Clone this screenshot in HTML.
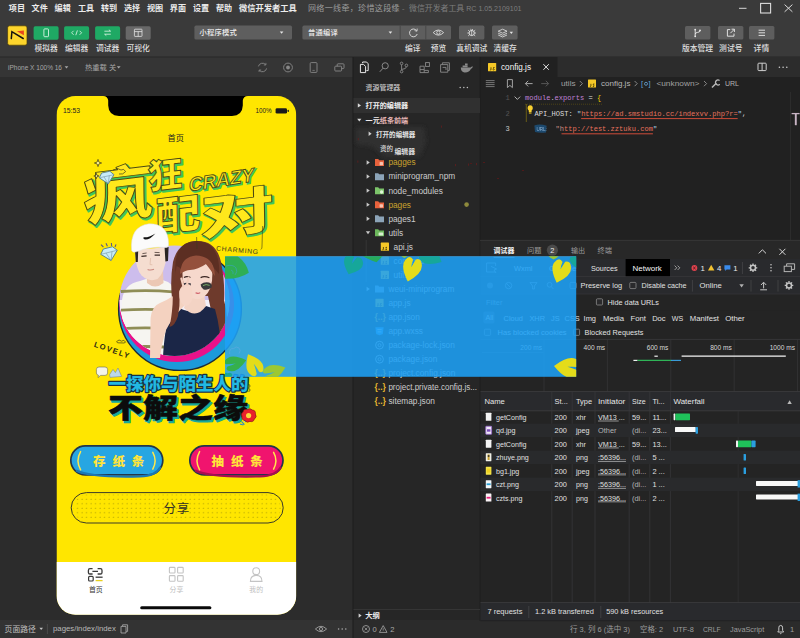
<!DOCTYPE html>
<html lang="zh"><head><meta charset="utf-8"><title>微信开发者工具</title>
<style>
html,body{margin:0;padding:0;background:#2c2c2c;overflow:hidden}
body{width:800px;height:638px;font-family:"Liberation Sans",sans-serif}
svg{display:block;position:absolute;left:0;top:0}
.cj{font-family:"Liberation Sans","Noto Sans CJK SC",sans-serif}
</style></head><body>
<svg font-family="Liberation Sans, sans-serif" width="800" height="638" viewBox="0 0 800 638">
<rect x="0" y="0" width="800" height="638" fill="#2c2c2c"/>
<rect x="0" y="0" width="800" height="57" fill="#3a3a3a"/>
<rect x="0" y="56.5" width="800" height="1" fill="#262626"/>
<rect x="0" y="57.5" width="353" height="19.5" fill="#353535"/>
<rect x="353" y="57" width="127" height="581" fill="#262626"/>
<rect x="480" y="57" width="320" height="183" fill="#212121"/>
<rect x="480" y="57" width="320" height="20" fill="#2c2c2c"/>
<rect x="480" y="57" width="77.5" height="20" fill="#212121"/>
<rect x="480" y="240" width="320" height="381" fill="#242424"/>
<rect x="0" y="620" width="353" height="18" fill="#333333"/>
<rect x="353" y="620" width="447" height="18" fill="#2b2b2b"/>
<path d="M353 57L353 638" stroke="#1c1c1c" stroke-width="1" fill="none"/>
<path d="M480 57L480 621" stroke="#1c1c1c" stroke-width="0.8" fill="none"/>
<g fill="#ececec"><text class="cj" x="8.8" y="11.2" font-size="8.1" font-weight="bold">项目</text></g>
<g fill="#ececec"><text class="cj" x="31.6" y="11.2" font-size="8.1" font-weight="bold">文件</text></g>
<g fill="#ececec"><text class="cj" x="54.6" y="11.2" font-size="8.1" font-weight="bold">编辑</text></g>
<g fill="#ececec"><text class="cj" x="78" y="11.2" font-size="8.1" font-weight="bold">工具</text></g>
<g fill="#ececec"><text class="cj" x="101" y="11.2" font-size="8.1" font-weight="bold">转到</text></g>
<g fill="#ececec"><text class="cj" x="124" y="11.2" font-size="8.1" font-weight="bold">选择</text></g>
<g fill="#ececec"><text class="cj" x="147" y="11.2" font-size="8.1" font-weight="bold">视图</text></g>
<g fill="#ececec"><text class="cj" x="169.8" y="11.2" font-size="8.1" font-weight="bold">界面</text></g>
<g fill="#ececec"><text class="cj" x="193" y="11.2" font-size="8.1" font-weight="bold">设置</text></g>
<g fill="#ececec"><text class="cj" x="216" y="11.2" font-size="8.1" font-weight="bold">帮助</text></g>
<g fill="#ececec"><text class="cj" x="239" y="11.2" font-size="8.25" font-weight="bold">微信开发者工具</text></g>
<g fill="#9c9c9c"><text class="cj" x="308" y="11.2" font-size="8" letter-spacing="0.35">网络一线牵，珍惜这段缘</text></g>
<g fill="#7c7c7c"><text x="402" y="11" font-family="Liberation Sans" font-size="7.5" xml:space="preserve">-</text></g>
<g fill="#7e7e7e"><text class="cj" x="409" y="11" font-size="7.9">微信开发者工具</text><text x="464.3" y="11" font-family="Liberation Sans" font-size="7.05" xml:space="preserve"> RC 1.05.2109101</text></g>
<path d="M739 8.3L746.5 8.3" stroke="#d8d8d8" stroke-width="1" fill="none"/>
<rect x="760.6" y="3.4" width="10" height="9.6" fill="none" stroke="#dcdcdc" stroke-width="1.1"/>
<path d="M784.6 4.6L792.4 11.8M792.4 4.6L784.6 11.8" fill="none" stroke="#dcdcdc" stroke-width="1"/>
<rect x="7.6" y="25.8" width="19.4" height="19.4" fill="#fdd52c" rx="2" stroke="#4a3c08" stroke-width="0.7"/>
<path d="M11.3 38.6L11.9 31.7L23.2 38.5" fill="none" stroke="#151210" stroke-width="1.5" stroke-linejoin="miter" stroke-linecap="round"/>
<path d="M16.9 31.3L23.9 30.4L23.9 35.2Z" fill="#e8451e"/>
<rect x="33.6" y="26.3" width="25" height="13.4" fill="#1fa964" rx="1.6"/>
<rect x="64.1" y="26.3" width="25" height="13.4" fill="#1fa964" rx="1.6"/>
<rect x="95.1" y="26.3" width="25" height="13.4" fill="#1fa964" rx="1.6"/>
<rect x="125.7" y="26.3" width="25" height="13.4" fill="#686868" rx="1.6"/>
<rect x="43.9" y="28.9" width="4.6" height="7.8" fill="none" rx="0.8" stroke="#d8f5e4" stroke-width="0.9"/>
<path d="M73.6 30.8L71.6 32.8L73.6 34.8M79.6 30.8L81.6 32.8L79.6 34.8M77.4 30.4L75.8 35.2" fill="none" stroke="#e2f7ea" stroke-width="0.8"/>
<path d="M104.4 31.2L110.6 31.2M108.9 29.8L110.6 31.2M110.8 34.2L104.6 34.2M106.3 35.6L104.6 34.2" fill="none" stroke="#e2f7ea" stroke-width="0.8"/>
<rect x="134.4" y="29.2" width="7.6" height="7.2" fill="none" rx="0.6" stroke="#e4e4e4" stroke-width="0.8"/>
<path d="M134.4 31.6L142 31.6M138.2 31.6L138.2 36.4" fill="none" stroke="#e4e4e4" stroke-width="0.8"/>
<g fill="#dedede"><text class="cj" x="34.48" y="50.8" font-size="7.75" font-weight="500">模拟器</text></g>
<g fill="#dedede"><text class="cj" x="64.97" y="50.8" font-size="7.75" font-weight="500">编辑器</text></g>
<g fill="#dedede"><text class="cj" x="95.97" y="50.8" font-size="7.75" font-weight="500">调试器</text></g>
<g fill="#dedede"><text class="cj" x="126.57" y="50.8" font-size="7.75" font-weight="500">可视化</text></g>
<rect x="194.4" y="25.6" width="97.6" height="14" fill="#5e5e5e" rx="1.6"/>
<g fill="#eeeeee"><text class="cj" x="199.6" y="35.4" font-size="7.3" letter-spacing="0.2" font-weight="500">小程序模式</text></g>
<path d="M279.8 31.6L283.4 31.6L281.6 33.8Z" fill="#e6e6e6"/>
<rect x="302.4" y="25.6" width="148.6" height="14" fill="#5e5e5e" rx="1.6"/>
<g fill="#eeeeee"><text class="cj" x="308" y="35.4" font-size="7.3" letter-spacing="0.2" font-weight="500">普通编译</text></g>
<path d="M388.6 31.6L392.2 31.6L390.4 33.8Z" fill="#e6e6e6"/>
<path d="M400.2 25.6L400.2 39.6" stroke="#444" stroke-width="0.8" fill="none"/>
<path d="M425.8 25.6L425.8 39.6" stroke="#444" stroke-width="0.8" fill="none"/>
<path d="M416.6 30.6A3.9 3.9 0 1 0 417.2 34.0" fill="none" stroke="#e0e0e0" stroke-width="0.9"/>
<path d="M417.2 28.6L417.0 31.2L414.6 30.6" fill="none" stroke="#e0e0e0" stroke-width="0.8"/>
<path d="M433.2 32.6Q438.4 27.4 443.6 32.6Q438.4 37.8 433.2 32.6Z" fill="none" stroke="#e0e0e0" stroke-width="0.85"/>
<circle cx="438.4" cy="32.6" r="1.7" fill="none" stroke="#e0e0e0" stroke-width="0.85"/>
<g fill="#dedede"><text class="cj" x="405.05" y="50.8" font-size="7.75" font-weight="500">编译</text></g>
<g fill="#dedede"><text class="cj" x="430.85" y="50.8" font-size="7.75" font-weight="500">预览</text></g>
<rect x="459" y="25.6" width="25.4" height="14" fill="#5e5e5e" rx="1.6"/>
<circle cx="471.7" cy="33" r="2.6" fill="none" stroke="#e4e4e4" stroke-width="0.9"/>
<path d="M471.7 30.4L471.7 35.6M468.2 30.2L469.6 31.4M475.2 30.2L473.8 31.4M467.4 33L469.1 33M476 33L474.3 33M468.2 35.9L469.6 34.7M475.2 35.9L473.8 34.7M470.4 29.2L471.7 30.3L473 29.2" fill="none" stroke="#e4e4e4" stroke-width="0.8"/>
<g fill="#dedede"><text class="cj" x="456.2" y="50.8" font-size="7.75" font-weight="500">真机调试</text></g>
<rect x="492" y="25.6" width="25.6" height="14" fill="#5e5e5e" rx="1.6"/>
<path d="M498.2 31.2L502.6 29.2L507 31.2L502.6 33.2ZM498.2 33.2L502.6 35.2L507 33.2M498.2 35.0L502.6 37.0L507 35.0" fill="none" stroke="#e4e4e4" stroke-width="0.8"/>
<path d="M509.6 31.8L513 31.8L511.3 33.9Z" fill="#e6e6e6"/>
<g fill="#dedede"><text class="cj" x="493.38" y="50.8" font-size="7.75" font-weight="500">清缓存</text></g>
<rect x="685" y="26" width="25.4" height="13.6" fill="#5e5e5e" rx="1.6"/>
<rect x="718" y="26" width="25.4" height="13.6" fill="#5e5e5e" rx="1.6"/>
<rect x="749" y="26" width="25.4" height="13.6" fill="#5e5e5e" rx="1.6"/>
<path d="M695.2 29.6L695.2 36.2M695.2 34.2Q695.2 32.6 697.6 32.4Q700 32.2 700 30.6" fill="none" stroke="#ececec" stroke-width="0.9"/>
<circle cx="695.2" cy="29.6" r="0.9" fill="#ececec"/>
<circle cx="695.2" cy="36.3" r="0.9" fill="#ececec"/>
<circle cx="700" cy="30.4" r="0.9" fill="#ececec"/>
<path d="M730.2 29.6L727.4 29.6L727.4 36.2L734 36.2L734 33.6" fill="none" stroke="#ececec" stroke-width="0.9"/>
<path d="M730.4 33.2L734.2 29.4M731.6 29.2L734.4 29.2L734.4 32" fill="none" stroke="#ececec" stroke-width="0.9"/>
<path d="M758.6 30.2L765 30.2M758.6 32.8L765 32.8M758.6 35.4L765 35.4" fill="none" stroke="#ececec" stroke-width="0.9"/>
<g fill="#dedede"><text class="cj" x="681.9" y="50.8" font-size="7.8" font-weight="500">版本管理</text></g>
<g fill="#dedede"><text class="cj" x="719.1" y="50.8" font-size="7.8" font-weight="500">测试号</text></g>
<g fill="#dedede"><text class="cj" x="753.6" y="50.8" font-size="7.8" font-weight="500">详情</text></g>
<g fill="#a6a6a6"><text x="8" y="69.8" font-family="Liberation Sans" font-size="7.3" textLength="54" lengthAdjust="spacingAndGlyphs" xml:space="preserve">iPhone X 100% 16</text></g>
<path d="M64.6 66.2L68.4 66.2L66.5 68.6Z" fill="#a6a6a6"/>
<g fill="#a6a6a6"><text class="cj" x="85" y="69.9" font-size="7.3">热重载</text><text class="cj" x="108.93" y="69.9" font-size="7.3">关</text></g>
<path d="M116.8 66.2L120.6 66.2L118.7 68.6Z" fill="#a6a6a6"/>
<path d="M258.4 66.4A4.2 4.2 0 0 1 265.6 64.6M266.6 68.4A4.2 4.2 0 0 1 259.4 70.4" fill="none" stroke="#888888" stroke-width="0.9"/>
<path d="M265.9 62.9L265.9 65L263.8 65M259.1 72L259.1 70L261.2 70" fill="none" stroke="#888888" stroke-width="0.8"/>
<circle cx="288" cy="67.5" r="4.4" fill="none" stroke="#888888" stroke-width="0.9"/>
<circle cx="288" cy="67.5" r="1.9" fill="#888888"/>
<rect x="310.2" y="62.6" width="6.8" height="9.8" fill="none" rx="1" stroke="#888888" stroke-width="0.9"/>
<path d="M312.4 70.4L314.8 70.4" stroke="#888888" stroke-width="0.7" fill="none"/>
<rect x="337.2" y="63.8" width="6.8" height="4.8" fill="none" rx="0.8" stroke="#888888" stroke-width="0.9"/>
<rect x="334.8" y="66.2" width="6.8" height="4.8" fill="#353535" rx="0.8" stroke="#888888" stroke-width="0.9"/>
<clipPath id="ph"><rect x="56.5" y="96.0" width="239.8" height="518.8" rx="19"/></clipPath>
<g clip-path="url(#ph)">
<rect x="56.5" y="96" width="239.8" height="518.8" fill="#ffe600"/>
<rect x="56.5" y="562" width="239.8" height="60" fill="#ffffff"/>
</g>
<path d="M103 96L248 96Q243.2 96.2 242.8 100.6L242.8 105.6Q242.4 115.8 232 116L119 116Q108.6 115.8 108.2 105.6L108.2 100.6Q107.8 96.2 103 96Z" fill="#000"/>
<g fill="#222"><text x="63" y="113.2" font-family="Liberation Sans" font-size="6.6" textLength="17" lengthAdjust="spacingAndGlyphs" xml:space="preserve">15:53</text></g>
<g fill="#222"><text x="255.4" y="113.2" font-family="Liberation Sans" font-size="6.4" textLength="16.2" lengthAdjust="spacingAndGlyphs" xml:space="preserve">100%</text></g>
<rect x="275.6" y="108.2" width="11.4" height="5.4" fill="#1a1a1a" rx="1.4"/>
<rect x="287.6" y="109.8" width="1.2" height="2.2" fill="#1a1a1a" rx="0.5"/>
<g fill="#222"><text class="cj" x="167.6" y="141" font-size="8.2">首页</text></g>
<g transform="translate(85.6 222.4) rotate(-7) skewX(-6) scale(0.28 0.24)" fill="#3fc65a" stroke="#3fc65a" stroke-width="7.75" stroke-linejoin="round"><text class="cj" x="0" y="0" font-size="250" font-weight="900">疯</text></g>
<g transform="translate(84 221) rotate(-7) skewX(-6) scale(0.28 0.24)" fill="#ffe81c" stroke="#4d4a12" stroke-width="3.49" stroke-linejoin="round"><text class="cj" x="0" y="0" font-size="250" font-weight="900">疯</text></g>
<g transform="translate(149.6 191.4) rotate(-7) skewX(-6) scale(0.14 0.14)" fill="#3fc65a" stroke="#3fc65a" stroke-width="14.28" stroke-linejoin="round"><text class="cj" x="0" y="0" font-size="250" font-weight="900">狂</text></g>
<g transform="translate(148 190) rotate(-7) skewX(-6) scale(0.14 0.14)" fill="#ffe81c" stroke="#4d4a12" stroke-width="6.42" stroke-linejoin="round"><text class="cj" x="0" y="0" font-size="250" font-weight="900">狂</text></g>
<g transform="translate(157.6 233.4) rotate(-7) skewX(-6) scale(0.18 0.16)" fill="#3fc65a" stroke="#3fc65a" stroke-width="11.9" stroke-linejoin="round"><text class="cj" x="0" y="0" font-size="250" font-weight="900">配</text></g>
<g transform="translate(156 232) rotate(-7) skewX(-6) scale(0.18 0.16)" fill="#ffe81c" stroke="#4d4a12" stroke-width="5.36" stroke-linejoin="round"><text class="cj" x="0" y="0" font-size="250" font-weight="900">配</text></g>
<g transform="translate(201.6 237.4) rotate(-7) skewX(-6) scale(0.3 0.2)" fill="#3fc65a" stroke="#3fc65a" stroke-width="8.02" stroke-linejoin="round"><text class="cj" x="0" y="0" font-size="250" font-weight="900">对</text></g>
<g transform="translate(200 236) rotate(-7) skewX(-6) scale(0.3 0.2)" fill="#ffe81c" stroke="#4d4a12" stroke-width="3.61" stroke-linejoin="round"><text class="cj" x="0" y="0" font-size="250" font-weight="900">对</text></g>
<g transform="translate(188.5 191.6) rotate(-9) skewX(-14)" font-family="Liberation Sans" font-weight="bold" font-size="19"><text x="1.4" y="1.4" fill="#3fc65a" stroke="#3fc65a" stroke-width="1.6" textLength="66" lengthAdjust="spacingAndGlyphs">CRAZY</text><text x="0" y="0" fill="#ffe81c" stroke="#4d4a12" stroke-width="0.9" textLength="66" lengthAdjust="spacingAndGlyphs">CRAZY</text></g>
<circle cx="180" cy="309" r="61.4" fill="#1c9ada" stroke="#1b2b3a" stroke-width="1.4"/>
<circle cx="176.6" cy="304.6" r="57.4" fill="#e9128a"/>
<clipPath id="pc"><circle cx="174.6" cy="300.8" r="55.2"/><rect x="110" y="215" width="135" height="80"/></clipPath>
<clipPath id="pc2"><circle cx="174.6" cy="300.8" r="55.2"/></clipPath>
<g clip-path="url(#pc)">
<g clip-path="url(#pc2)">
<circle cx="174.6" cy="300.8" r="56" fill="#cdbdec"/>
<rect x="116" y="300" width="124" height="60" fill="#f4f1f8"/>
</g>
<path d="M122 300Q124 284 140 281L146 279L160 279L168 282Q174 285 174 296L172 358L122 358Z" fill="#f6f5f1"/>
<path d="M121 290.1Q148 288.40000000000003 173 290.40000000000003L173 293.20000000000005Q148 291.20000000000005 121 292.90000000000003Z" fill="#8f8d56"/>
<path d="M121 308.7Q148 307.0 173 309.0L173 311.8Q148 309.8 121 311.5Z" fill="#8f8d56"/>
<path d="M121 327.3Q148 325.6 173 327.6L173 330.40000000000003Q148 328.40000000000003 121 330.1Z" fill="#8f8d56"/>
<path d="M121 345.9Q148 344.2 173 346.2L173 349.0Q148 347.0 121 348.7Z" fill="#8f8d56"/>
<path d="M146.5 270L163 270L163.5 283Q155 290 147 283Z" fill="#ecc8b4"/>
<path d="M196 241Q216 240 221 262Q225 282 224 300Q229 316 225 334Q218 338 213 330Q210 320 211 310L208 296L184 296L180 312Q178 326 170 328Q168 312 172 298Q170 280 173 262Q178 242 196 241Z" fill="#6e3a2c"/>
<path d="M176 306Q190 316 206 306L215 309Q221 330 221 356L163 356Q165 326 170 312Z" fill="#1b2647"/>
<path d="M188 294L204 294L206 306Q196 320 184 308Z" fill="#f3d3c4"/>
</g>
<path d="M135.4 250Q135 268 141.6 275.6Q149 282.4 157.6 279Q166 272 167.6 247Z" fill="#f5ddd0"/>
<path d="M135 250.4L138.2 250L137.8 262L135.8 262ZM164.6 247.6L168.6 247L168 261L165.4 261.6Z" fill="#2a2422"/>
<path d="M131.6 250.6Q129.6 226.4 149 223.8Q168.4 223.6 168.6 244Q168.8 247.4 166.4 247.4Q150 246 136.4 251.8Q132.6 253.2 131.6 250.6Z" fill="#fbfbfb" stroke="#dcdada" stroke-width="0.5"/>
<path d="M143.6 237.2Q147.4 238.2 155.4 233.4Q149.6 239.8 145.4 239.6Q142.8 239.2 143.6 237.2Z" fill="#111"/>
<path d="M141.4 256.4L146.6 255.8M154.6 255.2L160 255.2" fill="none" stroke="#3a2a26" stroke-width="1.2"/>
<path d="M142.4 253.6L146.6 253M154.6 252.4L159.6 252.6" fill="none" stroke="#4a3a34" stroke-width="0.8"/>
<path d="M147.6 269.4Q150.6 270.6 154 269.2" fill="none" stroke="#c8867c" stroke-width="1.1"/>
<path d="M150.6 258L150 264.6L152.4 264.8" fill="none" stroke="#e0bca8" stroke-width="0.8"/>
<path d="M182.4 270Q183 262 196 261.4Q211 262 212.4 274Q212.6 290 204 297Q196 302 189 296Q182 288 182.4 270Z" fill="#f6d8cc"/>
<path d="M180 274Q180 256 196 254.6Q214 255 215 276Q209 268 206 264Q198 269.6 190 270Q186 270 180 274Z" fill="#94503c"/>
<path d="M196 241Q184 241 178 252Q174 262 176 274L181 268Q183 257 196 255.6Q210 256 214 268L219 274Q220 256 212 247Q206 241 196 241Z" fill="#5c2e22"/>
<path d="M184 277.4Q187 275.6 190.4 277.6M200.6 277.6Q204.6 275.6 209.4 277.8" fill="none" stroke="#3a2522" stroke-width="1.2"/>
<path d="M200.6 284.6Q204 281.6 209 282.6Q212.6 284 211.6 287.6Q208 290.6 203.6 289.4Q200.6 287.6 200.6 284.6Z" fill="#3a3a3c"/>
<path d="M203 285.6Q206 283.6 209.6 285.4" fill="none" stroke="#7ab86a" stroke-width="0.9"/>
<path d="M183 283.4Q186.6 281.8 191 283.6L190.4 286.4Q186.6 287.4 183.4 286Z" fill="#3c3840"/>
<path d="M150.6 318Q152 306 160 303Q176 296 181 289L190 292Q190 300 184 306Q172 318 166 330Q162 342 160 358L150 358Z" fill="#f4d2c0"/>
<path d="M176.6 266Q172.6 288 172.6 304Q171.6 318 169.4 327Q175 326 178 316Q180 306 179.6 296Q178.6 280 180.4 268Z" fill="#70392b"/>
<path d="M179.4 297Q178.4 289 182 286.4L186 284Q190 283.4 191.6 287L192.8 297Q191 305.4 185.6 306Q180.6 304.6 179.4 297Z" fill="#f6d6c8"/>
<path d="M183.4 286.4L181.4 278.6M187 285L188.6 277.6" fill="none" stroke="#f3cfc0" stroke-width="2.2" stroke-linecap="round"/>
<path d="M195.6 292.8Q198 294 200.2 292.6" fill="none" stroke="#d0606a" stroke-width="1.1"/>
<g transform="translate(107 178) rotate(-12)">
<path d="M-7.5 -1.8L-4.2 -6L4.2 -6L7.5 -1.8L0 6Z" fill="#c8ecf8" stroke="#4a7a8a" stroke-width="0.8"/>
<path d="M-7.5 -1.8L7.5 -1.8M-2.7 -1.8L0 6L2.7 -1.8" fill="none" stroke="#7a9aa8" stroke-width="0.6"/>
</g>
<g transform="translate(109.5 254.2) rotate(-14)">
<path d="M-8.5 -1.95L-4.76 -6.5L4.76 -6.5L8.5 -1.95L0 6.5Z" fill="#c8ecf8" stroke="#4a7a8a" stroke-width="0.8"/>
<path d="M-8.5 -1.95L8.5 -1.95M-3.06 -1.95L0 6.5L3.06 -1.95" fill="none" stroke="#7a9aa8" stroke-width="0.6"/>
</g>
<path d="M98 159.4Q98 163 101.6 163Q98 163 98 166.6Q98 163 94.4 163Q98 163 98 159.4Z" fill="#fff6a0" stroke="#3c3a1c" stroke-width="0.7"/>
<path d="M96.4 173.4Q96.4 176 99 176Q96.4 176 96.4 178.6Q96.4 176 93.8 176Q96.4 176 96.4 173.4Z" fill="#fff6a0" stroke="#3c3a1c" stroke-width="0.7"/>
<path d="M101 244.6L103.4 247M106 243.2L107.4 246.2M111.4 243L111.6 246M116 244.4L115 247" fill="none" stroke="#5a5a8a" stroke-width="1.1"/>
<path d="M113 170Q118 167 121 170Q124 168 125.6 171.6Q123 175 119 174" fill="none" stroke="#3c3a1c" stroke-width="0.7"/>
<g fill="#3c3a1c" font-family="Liberation Sans" font-size="6.6"><text transform="translate(216 250.6) rotate(5)" textLength="42" lengthAdjust="spacing" font-size="6.8">CHARMING</text><text transform="translate(93.4 346.4) rotate(19)" textLength="36.6" lengthAdjust="spacing" font-size="7.6" font-weight="bold" fill="#2c2a14">LOVELY</text></g>
<path d="M116.6 341.6Q119 338.6 121.6 341.2Q124 338.8 125.6 342.2L124 343L117.6 342.8Z" fill="none" stroke="#3c3a1c" stroke-width="0.7"/>
<path d="M196.6 237L197 249M262.6 226L262 246Q262.4 249 260.6 249.6" fill="none" stroke="#3c3a1c" stroke-width="0.6"/>
<path d="M96.4 369.4Q96.4 367 99 367L105 367Q107.6 367 107.6 369.4L107.6 373Q107.6 375.4 105 375.4L100.6 375.4L98 377.6L98.4 375.2Q96.4 374.8 96.4 373Z" fill="#f4f4e6" stroke="#6a6a4a" stroke-width="0.6"/>
<path d="M109.6 374.6L113 369.4L115.4 372.6L118 368L121.6 376.4L110 377.4Z" fill="#bcd8ea" stroke="#6a7a8a" stroke-width="0.5"/>
<g transform="translate(108.6 390.2) scale(0.07 0.07)" fill="#20b4dc" stroke="#143248" stroke-width="34.27" stroke-linejoin="round"><text class="cj" x="0" y="0" font-size="250" font-weight="900">一探你与陌生人的</text></g>
<g transform="translate(108.6 390.2) scale(0.07 0.07)" fill="#22b8e2"><text class="cj" x="0" y="0" font-size="250" font-weight="900">一探你与陌生人的</text></g>
<g transform="translate(109.6 419.6) scale(0.14 0.11)" fill="#17a89a" stroke="#17a89a" stroke-width="9.74" stroke-linejoin="round"><text class="cj" x="0" y="0" font-size="250" font-weight="900">不解之缘</text></g>
<g transform="translate(108 418.2) scale(0.14 0.11)" fill="#0c0c0c" stroke="#0c0c0c" stroke-width="4.87" stroke-linejoin="round"><text class="cj" x="0" y="0" font-size="250" font-weight="900">不解之缘</text></g>
<path d="M248.6 384L250.2 386L248.6 388L250.2 390L248.6 392" fill="none" stroke="#2a2a2a" stroke-width="0.7"/>
<path d="M243 412Q243.6 408.6 247.4 409.6Q250 407.6 252.4 410Q256 410.4 255.4 414Q257.4 417 254.4 419Q253.6 422.4 250 421.4Q247 423.4 245 420.6Q241.2 420 242 416.4Q240.4 414 243 412Z" fill="#e8212b" stroke="#7a1418" stroke-width="0.6"/>
<circle cx="248.6" cy="415.6" r="2.6" fill="#f8d83a"/>
<path d="M241.4 421.4L244.4 424.6M240 424L243.4 425" fill="none" stroke="#2a88c8" stroke-width="1.1"/>
<rect x="70.8" y="445.8" width="92" height="29" fill="#27a6e2" rx="14.5" stroke="#23364a" stroke-width="1.7"/>
<path d="M80.6 451.6Q75.4 460.6 80.6 469.8" fill="none" stroke="#ffe84a" stroke-width="1.5" stroke-linecap="round"/>
<path d="M152.8 452.4Q157.4 460.6 152.8 469.2" fill="none" stroke="#ffe84a" stroke-width="1.5" stroke-linecap="round"/>
<path d="M76 470.6Q90 477.6 140 476.4Q156 476 160.4 467" fill="none" stroke="#1b78b4" stroke-width="2.2"/>
<g transform="translate(93 466.2) scale(0.05 0.05)" fill="#ffe43a"><text class="cj" x="0" y="0" font-size="250" font-weight="900" letter-spacing="137.5">存纸条</text></g>
<rect x="189.8" y="445.8" width="93.2" height="29" fill="#f0146e" rx="14.5" stroke="#23364a" stroke-width="1.7"/>
<path d="M199.6 451.6Q194.4 460.6 199.6 469.8" fill="none" stroke="#ffe84a" stroke-width="1.5" stroke-linecap="round"/>
<path d="M273.6 452.4Q278.2 460.6 273.6 469.2" fill="none" stroke="#ffe84a" stroke-width="1.5" stroke-linecap="round"/>
<path d="M195 470.6Q209 477.6 260 476.4Q276 476 281 467" fill="none" stroke="#a80e50" stroke-width="2.2"/>
<g transform="translate(211.6 466.2) scale(0.05 0.05)" fill="#ffe43a"><text class="cj" x="0" y="0" font-size="250" font-weight="900" letter-spacing="137.5">抽纸条</text></g>
<pattern id="dots" x="71" y="492.6" width="4.5" height="4.5" patternUnits="userSpaceOnUse"><circle cx="2" cy="2" r="0.5" fill="#76700c"/></pattern>
<rect x="71.2" y="492.6" width="212" height="30.4" fill="#ffe600" rx="15.2" stroke="#3a3a2a" stroke-width="1"/>
<rect x="73.6" y="494.6" width="207.2" height="26.4" fill="url(#dots)" rx="13.2"/>
<g transform="translate(163.6 512.6) scale(0.05 0.05)" fill="#333326"><text class="cj" x="0" y="0" font-size="250" letter-spacing="11.9">分享</text></g>
<path d="M92.6 568.6L90 568.6Q88.4 568.6 88.4 570.4L88.4 572.4Q88.4 574 90 574L92.6 574M97.6 568.6L100.4 568.6Q102 568.6 102 570.4L102 572.4Q102 574 100.4 574L97.6 574M92.4 571.3L98 571.3" fill="none" stroke="#3a3a3a" stroke-width="1.3"/>
<rect x="88.6" y="576.4" width="4.6" height="4.6" fill="none" rx="1" stroke="#3a3a3a" stroke-width="1.2"/>
<path d="M95.6 577.2L102.6 577.2" stroke="#3a3a3a" stroke-width="1.3" fill="none"/>
<path d="M95.6 580.6L102.6 580.6" stroke="#e8d020" stroke-width="1.3" fill="none"/>
<g fill="#333"><text class="cj" x="88.9" y="592.3" font-size="6.9">首页</text></g>
<rect x="169.4" y="567.4" width="5.6" height="5.6" fill="none" rx="0.8" stroke="#c4c4c4" stroke-width="1.1"/>
<rect x="169.4" y="575.6" width="5.6" height="5.6" fill="none" rx="0.8" stroke="#c4c4c4" stroke-width="1.1"/>
<rect x="177.6" y="567.4" width="5.6" height="5.6" fill="none" rx="0.8" stroke="#c4c4c4" stroke-width="1.1"/>
<rect x="177.6" y="575.6" width="5.6" height="5.6" fill="none" rx="0.8" stroke="#c4c4c4" stroke-width="1.1"/>
<g fill="#c0c0c0"><text class="cj" x="169.5" y="592.3" font-size="6.9">分享</text></g>
<circle cx="256.2" cy="571.2" r="3.4" fill="none" stroke="#c4c4c4" stroke-width="1.1"/>
<path d="M250.4 581.4Q250.4 575.4 256.2 575.4Q262 575.4 262 581.4Z" fill="none" stroke="#c4c4c4" stroke-width="1.1"/>
<g fill="#c0c0c0"><text class="cj" x="249.3" y="592.3" font-size="6.9">我的</text></g>
<rect x="140.2" y="606.2" width="71.2" height="3" fill="#0a0a0a" rx="1.5"/>
<path d="M360.4 64.4L360.4 72.6L365.6 72.6L365.6 66.6L363.6 64.4Z" fill="none" stroke="#e8e8e8" stroke-width="1"/>
<path d="M362.6 63.2L362.6 62L366.6 62L368.2 63.8L368.2 70.6L366.4 70.6" fill="none" stroke="#e8e8e8" stroke-width="1"/>
<circle cx="385.2" cy="65.8" r="3.1" fill="none" stroke="#8a8a8a" stroke-width="1"/>
<path d="M383 68.2L379.8 71.8" stroke="#8a8a8a" stroke-width="1" fill="none"/>
<circle cx="401.6" cy="63.4" r="1.3" fill="none" stroke="#8a8a8a" stroke-width="0.9"/>
<circle cx="401.6" cy="71.6" r="1.3" fill="none" stroke="#8a8a8a" stroke-width="0.9"/>
<circle cx="406.4" cy="65.4" r="1.3" fill="none" stroke="#8a8a8a" stroke-width="0.9"/>
<path d="M401.6 64.8L401.6 70.2M406.4 66.8Q406.4 69 401.8 69.4" fill="none" stroke="#8a8a8a" stroke-width="0.9"/>
<path d="M420 66.2L424.2 66.2L424.2 70.4L428.4 70.4L428.4 72.6L420 72.6ZM420 69.6L424 69.6M424.2 70.4L424.2 72.6" fill="none" stroke="#8a8a8a" stroke-width="0.9"/>
<rect x="425.6" y="62.6" width="3.8" height="3.8" fill="none" stroke="#8a8a8a" stroke-width="0.9"/>
<path d="M440.6 64.6L447.8 64.6L447.8 72.2L440.6 72.2ZM442.4 64.6L442.4 62.8L449.4 62.8L449.4 70.4L447.8 70.4M442.6 67.4L446 67.4L446 70" fill="none" stroke="#8a8a8a" stroke-width="0.9"/>
<path d="M460.8 67.6L470.6 67.6Q471.6 66.2 473 66.6Q472.4 68.6 470.8 69Q469.4 72.6 464.6 72.4Q461 72.2 460.8 67.6Z" fill="#8a8a8a"/>
<path d="M462.6 65.6L467.6 65.6L467.6 67.2L462.6 67.2ZM465 63.6L467.6 63.6L467.6 65.2L465 65.2Z" fill="#8a8a8a"/>
<g fill="#cccccc"><text class="cj" x="365.6" y="90.2" font-size="6.95" font-weight="500">资源管理器</text></g>
<circle cx="460.2" cy="87.6" r="0.75" fill="#c0c0c0"/>
<circle cx="463.8" cy="87.6" r="0.75" fill="#c0c0c0"/>
<circle cx="467.4" cy="87.6" r="0.75" fill="#c0c0c0"/>
<rect x="353.5" y="98" width="126.5" height="15" fill="#303030"/>
<path d="M357.8 103.2L361 105.4L357.8 107.6Z" fill="#d8d8d8"/>
<g fill="#f0f0f0"><text class="cj" x="365.6" y="108.2" font-size="7.1" font-weight="bold">打开的编辑器</text></g>
<path d="M357.2 118.8L361.4 118.8L359.3 121.4Z" fill="#d8d8d8"/>
<g fill="#f0ecec"><text class="cj" x="365.6" y="122.6" font-size="7.1" font-weight="bold">一元</text></g>
<g fill="#e6b8b8"><text class="cj" x="379.8" y="122.6" font-size="7.1" font-weight="bold">纸条前端</text></g>
<filter id="bl1" x="-10%" y="-20%" width="120%" height="140%"><feGaussianBlur stdDeviation="2.2"/></filter>
<path d="M356 128L424 127L426 142L420 156L384 157L372 146L356 144Z" fill="#333333" filter="url(#bl1)" opacity="0.9"/>
<path d="M368.6 131.6L371.6 133.8L368.6 136Z" fill="#d0d0d0"/>
<g fill="#e4e4e4"><text class="cj" x="376" y="136.8" font-size="6.55" font-weight="bold">打开的编辑器</text></g>
<g fill="#dcdcdc"><text class="cj" x="380" y="150.6" font-size="6.5" font-weight="500">资的</text></g>
<g fill="#dcdcdc"><text class="cj" x="394.4" y="154" font-size="6.9" font-weight="bold">编辑器</text></g>
<rect x="357.8" y="138" width="0.9" height="2.2" fill="#5c1e1e"/>
<rect x="357.4" y="160.5" width="0.9" height="2.2" fill="#5c1e1e"/>
<rect x="441" y="125.5" width="0.9" height="2.2" fill="#5c1e1e"/>
<rect x="468" y="163.5" width="0.9" height="2.2" fill="#5c1e1e"/>
<rect x="476" y="163" width="0.9" height="2.2" fill="#5c1e1e"/>
<rect x="455" y="164" width="0.9" height="2.2" fill="#5c1e1e"/>
<path d="M366.6 160.3L369.8 162.5L366.6 164.7Z" fill="#c8c8c8"/>
<path d="M375 159.1L378.2 159.1L379.2 160.3L384 160.3L384 166.1L375 166.1Z" fill="#e8623c"/>
<rect x="379.6" y="162.1" width="3.4" height="3.2" fill="#f6c4b0" rx="0.6"/>
<g fill="#c9a22e"><text x="388.4" y="165.4" font-family="Liberation Sans" font-size="8.3" textLength="27.23" lengthAdjust="spacingAndGlyphs" xml:space="preserve">pagges</text></g>
<path d="M366.6 174.35L369.8 176.55L366.6 178.75Z" fill="#c8c8c8"/>
<path d="M375 173.15L378.2 173.15L379.2 174.35L384 174.35L384 180.15L375 180.15Z" fill="#8ca4b8"/>
<g fill="#cccccc"><text x="388.4" y="179.45" font-family="Liberation Sans" font-size="8.3" textLength="66.89" lengthAdjust="spacingAndGlyphs" xml:space="preserve">miniprogram_npm</text></g>
<path d="M366.6 188.4L369.8 190.6L366.6 192.8Z" fill="#c8c8c8"/>
<path d="M375 187.2L378.2 187.2L379.2 188.4L384 188.4L384 194.2L375 194.2Z" fill="#7cc46a"/>
<circle cx="381.6" cy="192" r="1.7" fill="#e0f4d8"/>
<g fill="#cccccc"><text x="388.4" y="193.5" font-family="Liberation Sans" font-size="8.3" textLength="54.45" lengthAdjust="spacingAndGlyphs" xml:space="preserve">node_modules</text></g>
<path d="M366.6 202.45L369.8 204.65L366.6 206.85Z" fill="#c8c8c8"/>
<path d="M375 201.25L378.2 201.25L379.2 202.45L384 202.45L384 208.25L375 208.25Z" fill="#e8623c"/>
<rect x="379.6" y="204.25" width="3.4" height="3.2" fill="#f6c4b0" rx="0.6"/>
<g fill="#c9a22e"><text x="388.4" y="207.55" font-family="Liberation Sans" font-size="8.3" textLength="22.61" lengthAdjust="spacingAndGlyphs" xml:space="preserve">pages</text></g>
<path d="M366.6 216.5L369.8 218.7L366.6 220.9Z" fill="#c8c8c8"/>
<path d="M375 215.3L378.2 215.3L379.2 216.5L384 216.5L384 222.3L375 222.3Z" fill="#8ca4b8"/>
<g fill="#cccccc"><text x="388.4" y="221.6" font-family="Liberation Sans" font-size="8.3" textLength="27.23" lengthAdjust="spacingAndGlyphs" xml:space="preserve">pages1</text></g>
<path d="M365.8 231.35L370.2 231.35L368 234.35Z" fill="#c8c8c8"/>
<path d="M375 229.35L378.2 229.35L379.2 230.55L384 230.55L384 236.35L375 236.35Z" fill="#6cb85c"/>
<rect x="378.6" y="232.55" width="4.6" height="3" fill="#d8f0d0" rx="0.5"/>
<g fill="#cccccc"><text x="388.4" y="235.65" font-family="Liberation Sans" font-size="8.3" textLength="14.76" lengthAdjust="spacingAndGlyphs" xml:space="preserve">utils</text></g>
<rect x="380.8" y="242.6" width="8.2" height="8.2" fill="#f5c827" rx="0.6"/>
<path d="M383.4 247L383.4 249.4Q383.4 250 382.4 249.8M387 247.4Q385.6 246.8 385.8 248.2Q387.2 249 386.4 249.8Q385.4 250 385.2 249.4" fill="none" stroke="#3a3000" stroke-width="0.8"/>
<g fill="#cccccc"><text x="393.6" y="249.7" font-family="Liberation Sans" font-size="8.3" textLength="19.38" lengthAdjust="spacingAndGlyphs" xml:space="preserve">api.js</text></g>
<rect x="380.8" y="256.65" width="8.2" height="8.2" fill="#f5c827" rx="0.6"/>
<path d="M383.4 261.05L383.4 263.45Q383.4 264.05 382.4 263.85M387 261.45Q385.6 260.85 385.8 262.25Q387.2 263.05 386.4 263.85Q385.4 264.05 385.2 263.45" fill="none" stroke="#3a3000" stroke-width="0.8"/>
<g fill="#cccccc"><text x="393.6" y="263.75" font-family="Liberation Sans" font-size="8.3" textLength="30.45" lengthAdjust="spacingAndGlyphs" xml:space="preserve">config.js</text></g>
<rect x="380.8" y="270.7" width="8.2" height="8.2" fill="#f5c827" rx="0.6"/>
<path d="M383.4 275.1L383.4 277.5Q383.4 278.1 382.4 277.9M387 275.5Q385.6 274.9 385.8 276.3Q387.2 277.1 386.4 277.9Q385.4 278.1 385.2 277.5" fill="none" stroke="#3a3000" stroke-width="0.8"/>
<g fill="#cccccc"><text x="393.6" y="277.8" font-family="Liberation Sans" font-size="8.3" textLength="18.91" lengthAdjust="spacingAndGlyphs" xml:space="preserve">util.js</text></g>
<path d="M366.6 286.75L369.8 288.95L366.6 291.15Z" fill="#c8c8c8"/>
<path d="M375 285.55L378.2 285.55L379.2 286.75L384 286.75L384 292.55L375 292.55Z" fill="#8ca4b8"/>
<g fill="#cccccc"><text x="388.4" y="291.85" font-family="Liberation Sans" font-size="8.3" textLength="65.96" lengthAdjust="spacingAndGlyphs" xml:space="preserve">weui-miniprogram</text></g>
<rect x="375.4" y="298.8" width="8.2" height="8.2" fill="#f5c827" rx="0.6"/>
<path d="M378 303.2L378 305.6Q378 306.2 377 306M381.6 303.6Q380.2 303 380.4 304.4Q381.8 305.2 381 306Q380 306.2 379.8 305.6" fill="none" stroke="#3a3000" stroke-width="0.8"/>
<g fill="#cccccc"><text x="388.4" y="305.9" font-family="Liberation Sans" font-size="8.3" textLength="22.15" lengthAdjust="spacingAndGlyphs" xml:space="preserve">app.js</text></g>
<g fill="#e8b830"><text x="374.4" y="319.65" font-family="Liberation Sans" font-size="8.2" font-weight="bold" textLength="11.5" lengthAdjust="spacingAndGlyphs" xml:space="preserve">{..}</text></g>
<g fill="#cccccc"><text x="388.4" y="319.95" font-family="Liberation Sans" font-size="8.3" textLength="31.38" lengthAdjust="spacingAndGlyphs" xml:space="preserve">app.json</text></g>
<path d="M375.4 327.3L383.6 327.3L382.8 334.1L379.5 335.3L376.2 334.1Z" fill="#3f9ee8"/>
<path d="M377.4 329.5L381.6 329.5M377.6 331.9L381.4 331.9" fill="none" stroke="#e8f4ff" stroke-width="0.8"/>
<g fill="#cccccc"><text x="388.4" y="334" font-family="Liberation Sans" font-size="8.3" textLength="34.6" lengthAdjust="spacingAndGlyphs" xml:space="preserve">app.wxss</text></g>
<circle cx="379.5" cy="345.15" r="3.9" fill="none" stroke="#c8c8c8" stroke-width="0.9"/>
<circle cx="379.5" cy="345.15" r="1.5" fill="none" stroke="#c8c8c8" stroke-width="0.8"/>
<g fill="#cccccc"><text x="388.4" y="348.05" font-family="Liberation Sans" font-size="8.3" textLength="66.44" lengthAdjust="spacingAndGlyphs" xml:space="preserve">package-lock.json</text></g>
<circle cx="379.5" cy="359.2" r="3.9" fill="none" stroke="#c8c8c8" stroke-width="0.9"/>
<circle cx="379.5" cy="359.2" r="1.5" fill="none" stroke="#c8c8c8" stroke-width="0.8"/>
<g fill="#cccccc"><text x="388.4" y="362.1" font-family="Liberation Sans" font-size="8.3" textLength="48.91" lengthAdjust="spacingAndGlyphs" xml:space="preserve">package.json</text></g>
<g fill="#e8b830"><text x="374.4" y="375.85" font-family="Liberation Sans" font-size="8.2" font-weight="bold" textLength="11.5" lengthAdjust="spacingAndGlyphs" xml:space="preserve">{..}</text></g>
<g fill="#cccccc"><text x="388.4" y="376.15" font-family="Liberation Sans" font-size="8.3" textLength="66.9" lengthAdjust="spacingAndGlyphs" xml:space="preserve">project.config.json</text></g>
<g fill="#e8b830"><text x="374.4" y="389.9" font-family="Liberation Sans" font-size="8.2" font-weight="bold" textLength="11.5" lengthAdjust="spacingAndGlyphs" xml:space="preserve">{..}</text></g>
<g fill="#cccccc"><text x="388.4" y="390.2" font-family="Liberation Sans" font-size="8.3" textLength="88.6" lengthAdjust="spacingAndGlyphs" xml:space="preserve">project.private.config.js...</text></g>
<g fill="#e8b830"><text x="374.4" y="403.95" font-family="Liberation Sans" font-size="8.2" font-weight="bold" textLength="11.5" lengthAdjust="spacingAndGlyphs" xml:space="preserve">{..}</text></g>
<g fill="#cccccc"><text x="388.4" y="404.25" font-family="Liberation Sans" font-size="8.3" textLength="46.59" lengthAdjust="spacingAndGlyphs" xml:space="preserve">sitemap.json</text></g>
<circle cx="466.6" cy="204.6" r="2.3" fill="#8e8a3c"/>
<path d="M366.2 240L366.2 282" stroke="#3c3c3c" stroke-width="0.7" fill="none"/>
<path d="M353.5 609.5L480 609.5" stroke="#3a3a3a" stroke-width="0.8" fill="none"/>
<path d="M358.6 613.4L361.6 615.6L358.6 617.8Z" fill="#d0d0d0"/>
<g fill="#f0f0f0"><text class="cj" x="365.2" y="618.4" font-size="7.3" font-weight="bold">大纲</text></g>
<rect x="488" y="63" width="8.2" height="8.2" fill="#f5c827" rx="0.5"/>
<path d="M490.97 67.31L490.97 69.56Q490.97 70.17 489.95 69.97M494.56 67.51Q493.12 67 493.33 68.33Q494.76 69.15 493.94 69.97Q492.92 70.17 492.71 69.56" fill="none" stroke="#3a3000" stroke-width="0.8"/>
<g fill="#f4f4f4"><text x="501" y="69.8" font-family="Liberation Sans" font-size="8.4" textLength="30" lengthAdjust="spacingAndGlyphs" xml:space="preserve">config.js</text></g>
<path d="M543.4 64.2L548.8 69.8M548.8 64.2L543.4 69.8" fill="none" stroke="#e8e8e8" stroke-width="0.95"/>
<rect x="758" y="63.2" width="8.2" height="7.4" fill="none" rx="0.8" stroke="#d0d0d0" stroke-width="1"/>
<path d="M762.1 63.2L762.1 70.6" stroke="#d0d0d0" stroke-width="1" fill="none"/>
<circle cx="779.4" cy="67.2" r="0.8" fill="#d0d0d0"/>
<circle cx="783.1" cy="67.2" r="0.8" fill="#d0d0d0"/>
<circle cx="786.8" cy="67.2" r="0.8" fill="#d0d0d0"/>
<path d="M485.8 80.6L494.6 80.6M485.8 82.6L494.6 82.6M485.8 84.6L494.6 84.6M485.8 86.6L494.6 86.6" fill="none" stroke="#8c8c8c" stroke-width="0.8"/>
<path d="M507.4 79.6L512.4 79.6L512.4 87.6L509.9 85.4L507.4 87.6Z" fill="none" stroke="#b0b0b0" stroke-width="0.9"/>
<path d="M532.6 83.6L525.4 83.6M528.2 80.8L525.4 83.6L528.2 86.4" fill="none" stroke="#b4b4b4" stroke-width="0.9"/>
<path d="M541.2 83.6L548.6 83.6M545.8 80.8L548.6 83.6L545.8 86.4" fill="none" stroke="#5c5c5c" stroke-width="0.9"/>
<g fill="#a0a0a0"><text x="561" y="86.4" font-family="Liberation Sans" font-size="8" textLength="14.6" lengthAdjust="spacingAndGlyphs" xml:space="preserve">utils</text></g>
<path d="M579.8 81L582.4 83.6L579.8 86.2" fill="none" stroke="#a0a0a0" stroke-width="0.8"/>
<rect x="588" y="79.6" width="8" height="8" fill="#f5c827" rx="0.5"/>
<path d="M590.9 83.8L590.9 86Q590.9 86.6 589.9 86.4M594.4 84Q593 83.5 593.2 84.8Q594.6 85.6 593.8 86.4Q592.8 86.6 592.6 86" fill="none" stroke="#3a3000" stroke-width="0.8"/>
<g fill="#b8b8b8"><text x="601" y="86.4" font-family="Liberation Sans" font-size="8" textLength="29.4" lengthAdjust="spacingAndGlyphs" xml:space="preserve">config.js</text></g>
<path d="M634.6 81L637.2 83.6L634.6 86.2" fill="none" stroke="#a0a0a0" stroke-width="0.8"/>
<g fill="#6aa8d8"><text x="641" y="86" font-family="Liberation Sans" font-size="7.4" xml:space="preserve">[</text></g>
<g fill="#6aa8d8"><text x="648.6" y="86" font-family="Liberation Sans" font-size="7.4" xml:space="preserve">]</text></g>
<circle cx="646" cy="83.8" r="1.5" fill="none" stroke="#6aa8d8" stroke-width="0.8"/>
<g fill="#a0a0a0"><text x="656.4" y="86.4" font-family="Liberation Sans" font-size="8" textLength="43" lengthAdjust="spacingAndGlyphs" xml:space="preserve">&lt;unknown&gt;</text></g>
<path d="M704 81L706.6 83.6L704 86.2" fill="none" stroke="#a0a0a0" stroke-width="0.8"/>
<path d="M712 87.6L716.2 83.2" fill="none" stroke="#b8b8b8" stroke-width="1.5"/>
<path d="M719.6 80.4A2.5 2.5 0 1 0 719.8 84.2" fill="none" stroke="#b8b8b8" stroke-width="1.2"/>
<g fill="#b4b4b4"><text x="725" y="86.4" font-family="Liberation Sans" font-size="8" textLength="14" lengthAdjust="spacingAndGlyphs" xml:space="preserve">URL</text></g>
<g fill="#555555"><text x="505.6" y="100.4" font-family="Liberation Mono" font-size="7.05" xml:space="preserve">1</text></g>
<g fill="#555555"><text x="505.4" y="115.9" font-family="Liberation Mono" font-size="7.05" xml:space="preserve">2</text></g>
<g fill="#c8c8c8"><text x="505.4" y="131" font-family="Liberation Mono" font-size="7.05" xml:space="preserve">3</text></g>
<path d="M514.6 96.6L517.4 99.4L520.2 96.6" fill="none" stroke="#c0c0c0" stroke-width="0.9"/>
<g fill="#c082d8"><text x="525" y="100.4" font-family="Liberation Mono" font-size="7.05" xml:space="preserve">module</text></g>
<g fill="#d4d4d4"><text x="550.38" y="100.4" font-family="Liberation Mono" font-size="7.05" xml:space="preserve">.</text></g>
<g fill="#c082d8"><text x="554.61" y="100.4" font-family="Liberation Mono" font-size="7.05" xml:space="preserve">exports</text></g>
<g fill="#e0e0e0"><text x="584.23" y="100.4" font-family="Liberation Mono" font-size="7.05" xml:space="preserve"> = </text></g>
<g fill="#f0d000"><text x="596.92" y="100.4" font-family="Liberation Mono" font-size="7.05" xml:space="preserve">{</text></g>
<path d="M525 104.2L602 104.2" stroke="#6a5a10" stroke-width="0.6" fill="none" stroke-dasharray="1 1"/>
<path d="M527.6 108.2Q527.6 105.2 530.2 105.2Q532.8 105.2 532.8 108.2Q532.8 109.6 531.6 110.6L531.6 112L528.8 112L528.8 110.6Q527.6 109.6 527.6 108.2Z" fill="#f8d030"/>
<rect x="528.9" y="112.4" width="2.6" height="1.2" fill="#e8c020"/>
<path d="M526.3 104L526.3 122" stroke="#7a6a14" stroke-width="0.8" fill="none"/>
<g fill="#dcdcdc"><text x="534.6" y="115.9" font-family="Liberation Mono" font-size="7.05" xml:space="preserve">API_HOST: </text></g>
<g fill="#b8d8f0"><text x="576.91" y="115.9" font-family="Liberation Mono" font-size="7.05" xml:space="preserve">&quot;</text></g>
<g fill="#e8735e"><text x="581.14" y="115.9" font-family="Liberation Mono" font-size="7.05" xml:space="preserve">https:</text></g>
<g fill="#e8735e"><text x="606.52" y="115.9" font-family="Liberation Mono" font-size="7.05" xml:space="preserve">//ad.smstudio.cc/indexvv.php?r=</text></g>
<g fill="#b8d8f0"><text x="737.67" y="115.9" font-family="Liberation Mono" font-size="7.05" xml:space="preserve">&quot;</text></g>
<g fill="#d8d8d8"><text x="741.9" y="115.9" font-family="Liberation Mono" font-size="7.05" xml:space="preserve">,</text></g>
<path d="M581.14 118.6L737.67 118.6" stroke="#e0503c" stroke-width="0.9" fill="none"/>
<filter id="bl2"><feGaussianBlur stdDeviation="0.7"/></filter>
<path d="M534.4 125.4Q540 123.4 546.6 125.8L546 132.4Q540 133.4 535 132Z" fill="#1f4a6e" filter="url(#bl2)"/>
<g fill="#a8c8e8" opacity="0.8"><text x="536.4" y="130.6" font-family="Liberation Sans" font-size="4.6" xml:space="preserve">URL:</text></g>
<g fill="#c89088"><text x="555.6" y="131" font-family="Liberation Mono" font-size="7.05" xml:space="preserve">&quot;h</text></g>
<g fill="#e8735e"><text x="564.06" y="131" font-family="Liberation Mono" font-size="7.05" xml:space="preserve">ttp:</text></g>
<g fill="#e8735e"><text x="580.98" y="131" font-family="Liberation Mono" font-size="7.05" xml:space="preserve">//test.zztuku.com</text></g>
<g fill="#b8d8f0"><text x="652.91" y="131" font-family="Liberation Mono" font-size="7.05" xml:space="preserve">&quot;</text></g>
<path d="M561.52 133.8L652.91 133.8" stroke="#e0503c" stroke-width="0.9" fill="none"/>
<path d="M790.4 92L790.4 240" stroke="#343434" stroke-width="0.7" fill="none"/>
<path d="M791.6 113.6L799.6 113.6" fill="none" stroke="#c8b4c4" stroke-width="1.3"/>
<path d="M795.8 113.6L795.8 125.2" fill="none" stroke="#c8b4c4" stroke-width="1.9"/>
<rect x="483" y="162" width="2" height="0.8" fill="#5a1a1a"/>
<rect x="497" y="178" width="2" height="0.8" fill="#5a1a1a"/>
<rect x="522" y="170" width="2" height="0.8" fill="#5a1a1a"/>
<rect x="470" y="163" width="2" height="0.8" fill="#5a1a1a"/>
<path d="M480 240.4L800 240.4" stroke="#3c3c3c" stroke-width="0.8" fill="none"/>
<rect x="480.5" y="241" width="319.5" height="18" fill="#282828"/>
<g fill="#f4f4f4"><text class="cj" x="493.6" y="252.9" font-size="6.95" font-weight="bold">调试器</text></g>
<path d="M493.6 257.4L514.6 257.4" stroke="#d0d0d0" stroke-width="0.7" fill="none"/>
<g fill="#9a9a9a"><text class="cj" x="527" y="252.9" font-size="7.2">问题</text></g>
<circle cx="552.4" cy="250.2" r="5.6" fill="#4a4a4a"/>
<g fill="#ececec"><text x="550.34" y="252.9" font-family="Liberation Sans" font-size="7.4" xml:space="preserve">2</text></g>
<g fill="#9a9a9a"><text class="cj" x="571" y="252.9" font-size="7.1">输出</text></g>
<g fill="#9a9a9a"><text class="cj" x="597.6" y="252.9" font-size="7.2">终端</text></g>
<path d="M758.8 253.4L762.4 249.8L766 253.4" fill="none" stroke="#d8d8d8" stroke-width="1"/>
<path d="M779.4 248.8L785.4 254.8M785.4 248.8L779.4 254.8" fill="none" stroke="#d8d8d8" stroke-width="1"/>
<rect x="480.5" y="259" width="319.5" height="17.4" fill="#292a2d"/>
<path d="M480.5 276.6L800 276.6" stroke="#3e3e40" stroke-width="0.7" fill="none"/>
<path d="M486.6 263L486.6 272L495.6 272M486.6 263L495.6 263L495.6 266" fill="none" stroke="#9aa0a6" stroke-width="0.8"/>
<path d="M491 266.4L496.6 269L494 270L496 273" fill="none" stroke="#9aa0a6" stroke-width="0.8"/>
<g fill="#e0e0e0"><text x="514" y="270.6" font-family="Liberation Sans" font-size="7.4" xml:space="preserve">Wxml</text></g>
<g fill="#e0e0e0"><text x="549" y="270.6" font-family="Liberation Sans" font-size="7.4" xml:space="preserve">Console</text></g>
<g fill="#e4e4e4"><text x="591" y="270.6" font-family="Liberation Sans" font-size="7.4" textLength="26.6" lengthAdjust="spacingAndGlyphs" xml:space="preserve">Sources</text></g>
<rect x="625.6" y="259" width="44.4" height="17.2" fill="#000000"/>
<g fill="#f8f8f8"><text x="632.6" y="270.6" font-family="Liberation Sans" font-size="7.4" textLength="29.2" lengthAdjust="spacingAndGlyphs" xml:space="preserve">Network</text></g>
<path d="M674.6 265.6L676.8 267.8L674.6 270M677.6 265.6L679.8 267.8L677.6 270" fill="none" stroke="#b8b8b8" stroke-width="0.8"/>
<circle cx="694.4" cy="268" r="2.9" fill="#e0434e"/>
<path d="M693.2 266.8L695.6 269.2M695.6 266.8L693.2 269.2" fill="none" stroke="#2a1010" stroke-width="0.7"/>
<g fill="#e8e8e8"><text x="700.6" y="270.8" font-family="Liberation Sans" font-size="7.8" xml:space="preserve">1</text></g>
<path d="M708 270.6L711.2 264.8L714.4 270.6Z" fill="#f2c230"/>
<g fill="#e8e8e8"><text x="717" y="270.8" font-family="Liberation Sans" font-size="7.8" xml:space="preserve">4</text></g>
<path d="M724.4 265.2L730.4 265.2L730.4 269.6L726.6 269.6L725.2 271L725.2 269.6L724.4 269.6Z" fill="#3a8aea"/>
<g fill="#e8e8e8"><text x="733.2" y="270.8" font-family="Liberation Sans" font-size="7.8" xml:space="preserve">1</text></g>
<path d="M742.4 262L742.4 274" stroke="#4a4a4c" stroke-width="0.7" fill="none"/>
<circle cx="753" cy="267.8" r="2.5" fill="none" stroke="#c4c4c4" stroke-width="1.5"/>
<path d="M755.8 267.8L757.3 267.8M754.98 269.78L756.04 270.84M753 270.6L753 272.1M751.02 269.78L749.96 270.84M750.2 267.8L748.7 267.8M751.02 265.82L749.96 264.76M753 265L753 263.5M754.98 265.82L756.04 264.76" fill="none" stroke="#c4c4c4" stroke-width="1.3"/>
<circle cx="771" cy="264.8" r="0.8" fill="#c4c4c4"/>
<circle cx="771" cy="267.8" r="0.8" fill="#c4c4c4"/>
<circle cx="771" cy="270.8" r="0.8" fill="#c4c4c4"/>
<rect x="784.2" y="266.2" width="7.2" height="5.4" fill="none" stroke="#b4b4b4" stroke-width="1"/>
<path d="M786.6 266L786.6 263.8L794.6 263.8L794.6 269.4L791.6 269.4" fill="none" stroke="#b4b4b4" stroke-width="1"/>
<rect x="480.5" y="277" width="319.5" height="17" fill="#292a2d"/>
<path d="M480.5 294.2L800 294.2" stroke="#3e3e40" stroke-width="0.7" fill="none"/>
<circle cx="490" cy="285.6" r="3" fill="#6a6a6a"/>
<circle cx="508.6" cy="285.6" r="3.2" fill="none" stroke="#9aa0a6" stroke-width="0.8"/>
<path d="M506.4 283.4L510.8 287.8" stroke="#9aa0a6" stroke-width="0.8" fill="none"/>
<path d="M530 282.6L537 282.6L534.4 286L534.4 289L532.6 289L532.6 286Z" fill="none" stroke="#9aa0a6" stroke-width="0.8"/>
<circle cx="549.6" cy="284.8" r="2.4" fill="none" stroke="#9aa0a6" stroke-width="0.8"/>
<path d="M551.4 286.8L553.4 289" stroke="#9aa0a6" stroke-width="0.8" fill="none"/>
<rect x="570" y="282.4" width="6.2" height="6.2" fill="#2a2a2c" rx="1" stroke="#8a8a8a" stroke-width="0.8"/>
<g fill="#e2e2e2"><text x="580.6" y="288.2" font-family="Liberation Sans" font-size="7.4" textLength="41.6" lengthAdjust="spacingAndGlyphs" xml:space="preserve">Preserve log</text></g>
<rect x="629.8" y="282.4" width="6.2" height="6.2" fill="#2a2a2c" rx="1" stroke="#8a8a8a" stroke-width="0.8"/>
<g fill="#e2e2e2"><text x="641.6" y="288.2" font-family="Liberation Sans" font-size="7.4" textLength="45" lengthAdjust="spacingAndGlyphs" xml:space="preserve">Disable cache</text></g>
<path d="M692.4 280L692.4 291.6" stroke="#4a4a4c" stroke-width="0.7" fill="none"/>
<g fill="#e2e2e2"><text x="699.6" y="288.2" font-family="Liberation Sans" font-size="7.4" textLength="22.2" lengthAdjust="spacingAndGlyphs" xml:space="preserve">Online</text></g>
<path d="M739.4 284.2L743.8 284.2L741.6 287.6Z" fill="#b0b0b0"/>
<path d="M751 280L751 291.6" stroke="#4a4a4c" stroke-width="0.7" fill="none"/>
<path d="M763.6 288.4L763.6 282.6M761 285L763.6 282.2L766.2 285M760.2 289.8L767 289.8" fill="none" stroke="#c4c4c4" stroke-width="1"/>
<path d="M778 280L778 291.6" stroke="#4a4a4c" stroke-width="0.7" fill="none"/>
<circle cx="789" cy="285.4" r="2.5" fill="none" stroke="#c4c4c4" stroke-width="1.5"/>
<path d="M791.8 285.4L793.3 285.4M790.98 287.38L792.04 288.44M789 288.2L789 289.7M787.02 287.38L785.96 288.44M786.2 285.4L784.7 285.4M787.02 283.42L785.96 282.36M789 282.6L789 281.1M790.98 283.42L792.04 282.36" fill="none" stroke="#c4c4c4" stroke-width="1.3"/>
<rect x="480.5" y="294.6" width="319.5" height="16" fill="#242424"/>
<g fill="#a0a0a0"><text x="486" y="304.6" font-family="Liberation Sans" font-size="7.4" xml:space="preserve">Filter</text></g>
<rect x="596.4" y="298.8" width="6.2" height="6.2" fill="#2a2a2c" rx="1" stroke="#8a8a8a" stroke-width="0.8"/>
<g fill="#e2e2e2"><text x="607.6" y="304.8" font-family="Liberation Sans" font-size="7.4" textLength="51.4" lengthAdjust="spacingAndGlyphs" xml:space="preserve">Hide data URLs</text></g>
<rect x="483.4" y="311.4" width="11" height="12" fill="#454648" rx="1.6"/>
<g fill="#d8d8d8"><text x="485.4" y="320.4" font-family="Liberation Sans" font-size="7.2" xml:space="preserve">All</text></g>
<g fill="#e2e2e2"><text x="503.6" y="320.8" font-family="Liberation Sans" font-size="7.4" xml:space="preserve">Cloud</text></g>
<g fill="#e2e2e2"><text x="529.4" y="320.8" font-family="Liberation Sans" font-size="7.4" xml:space="preserve">XHR</text></g>
<g fill="#e2e2e2"><text x="551" y="320.8" font-family="Liberation Sans" font-size="7.4" xml:space="preserve">JS</text></g>
<g fill="#e2e2e2"><text x="564.6" y="320.8" font-family="Liberation Sans" font-size="7.4" xml:space="preserve">CSS</text></g>
<g fill="#e2e2e2"><text x="583.6" y="320.8" font-family="Liberation Sans" font-size="7.4" textLength="12.4" lengthAdjust="spacingAndGlyphs" xml:space="preserve">Img</text></g>
<g fill="#e2e2e2"><text x="603" y="320.8" font-family="Liberation Sans" font-size="7.4" textLength="21" lengthAdjust="spacingAndGlyphs" xml:space="preserve">Media</text></g>
<g fill="#e2e2e2"><text x="630.6" y="320.8" font-family="Liberation Sans" font-size="7.4" textLength="15.4" lengthAdjust="spacingAndGlyphs" xml:space="preserve">Font</text></g>
<g fill="#e2e2e2"><text x="652.2" y="320.8" font-family="Liberation Sans" font-size="7.4" textLength="13.4" lengthAdjust="spacingAndGlyphs" xml:space="preserve">Doc</text></g>
<g fill="#e2e2e2"><text x="671.8" y="320.8" font-family="Liberation Sans" font-size="7.4" textLength="11.4" lengthAdjust="spacingAndGlyphs" xml:space="preserve">WS</text></g>
<g fill="#e2e2e2"><text x="689.8" y="320.8" font-family="Liberation Sans" font-size="7.4" textLength="29.2" lengthAdjust="spacingAndGlyphs" xml:space="preserve">Manifest</text></g>
<g fill="#e2e2e2"><text x="725.2" y="320.8" font-family="Liberation Sans" font-size="7.4" textLength="19.4" lengthAdjust="spacingAndGlyphs" xml:space="preserve">Other</text></g>
<rect x="484.4" y="329.2" width="6.2" height="6.2" fill="#2a2a2c" rx="1" stroke="#8a8a8a" stroke-width="0.8"/>
<g fill="#e2e2e2"><text x="497.6" y="335.2" font-family="Liberation Sans" font-size="7.4" textLength="69" lengthAdjust="spacingAndGlyphs" xml:space="preserve">Has blocked cookies</text></g>
<rect x="573.4" y="329.2" width="6.2" height="6.2" fill="#2a2a2c" rx="1" stroke="#8a8a8a" stroke-width="0.8"/>
<g fill="#e2e2e2"><text x="584.6" y="335.2" font-family="Liberation Sans" font-size="7.4" textLength="58.8" lengthAdjust="spacingAndGlyphs" xml:space="preserve">Blocked Requests</text></g>
<path d="M480.5 339.4L800 339.4" stroke="#3e3e40" stroke-width="0.7" fill="none"/>
<path d="M544 339.4L544 391.4" stroke="#38383a" stroke-width="0.7" fill="none"/>
<path d="M607.4 339.4L607.4 391.4" stroke="#38383a" stroke-width="0.7" fill="none"/>
<path d="M670.8 339.4L670.8 391.4" stroke="#38383a" stroke-width="0.7" fill="none"/>
<path d="M734.2 339.4L734.2 391.4" stroke="#38383a" stroke-width="0.7" fill="none"/>
<path d="M797.6 339.4L797.6 391.4" stroke="#38383a" stroke-width="0.7" fill="none"/>
<g fill="#d8d8d8"><text x="520.36" y="350" font-family="Liberation Sans" font-size="6.6" xml:space="preserve">200 ms</text></g>
<g fill="#d8d8d8"><text x="583.56" y="350" font-family="Liberation Sans" font-size="6.6" xml:space="preserve">400 ms</text></g>
<g fill="#d8d8d8"><text x="646.76" y="350" font-family="Liberation Sans" font-size="6.6" xml:space="preserve">600 ms</text></g>
<g fill="#d8d8d8"><text x="710.16" y="350" font-family="Liberation Sans" font-size="6.6" xml:space="preserve">800 ms</text></g>
<g fill="#d8d8d8"><text x="769.69" y="350" font-family="Liberation Sans" font-size="6.6" xml:space="preserve">1000 ms</text></g>
<path d="M482 352.4L543.4 352.4" stroke="#4a4a4a" stroke-width="0.6" fill="none"/>
<path d="M654.4 356.2L657.8 356.2" fill="none" stroke="#f0f0f0" stroke-width="1.2"/>
<path d="M681.6 356.2L785.8 356.2" fill="none" stroke="#f4f4f4" stroke-width="1.3"/>
<path d="M633.4 360.4L637.6 360.4" fill="none" stroke="#f0f0f0" stroke-width="1.2"/>
<path d="M637.6 360.4L671 360.4" fill="none" stroke="#2fb457" stroke-width="1.2"/>
<path d="M671 360.4L681 360.4" fill="none" stroke="#3a9ad8" stroke-width="1.2"/>
<path d="M480.5 391.6L800 391.6" stroke="#444446" stroke-width="0.7" fill="none"/>
<rect x="480.5" y="392" width="319.5" height="18.6" fill="#292a2d"/>
<path d="M480.5 410.8L800 410.8" stroke="#444446" stroke-width="0.7" fill="none"/>
<g fill="#e6e6e6"><text x="484.4" y="403.9" font-family="Liberation Sans" font-size="7.4" textLength="20.4" lengthAdjust="spacingAndGlyphs" xml:space="preserve">Name</text></g>
<g fill="#e6e6e6"><text x="554.6" y="403.9" font-family="Liberation Sans" font-size="7.4" xml:space="preserve">St...</text></g>
<g fill="#e6e6e6"><text x="576" y="403.9" font-family="Liberation Sans" font-size="7.4" textLength="16" lengthAdjust="spacingAndGlyphs" xml:space="preserve">Type</text></g>
<g fill="#e6e6e6"><text x="598" y="403.9" font-family="Liberation Sans" font-size="7.4" textLength="27.4" lengthAdjust="spacingAndGlyphs" xml:space="preserve">Initiator</text></g>
<g fill="#e6e6e6"><text x="632" y="403.9" font-family="Liberation Sans" font-size="7.4" textLength="13.6" lengthAdjust="spacingAndGlyphs" xml:space="preserve">Size</text></g>
<g fill="#e6e6e6"><text x="652.4" y="403.9" font-family="Liberation Sans" font-size="7.4" xml:space="preserve">Ti...</text></g>
<g fill="#e6e6e6"><text x="673.4" y="403.9" font-family="Liberation Sans" font-size="7.4" textLength="31.2" lengthAdjust="spacingAndGlyphs" xml:space="preserve">Waterfall</text></g>
<path d="M787.4 404L789.6 400.2L791.8 404Z" fill="#b8b8b8"/>
<path d="M551.8 392L551.8 602.4" stroke="#3a3a3c" stroke-width="0.7" fill="none"/>
<path d="M572.2 392L572.2 602.4" stroke="#3a3a3c" stroke-width="0.7" fill="none"/>
<path d="M595 392L595 602.4" stroke="#3a3a3c" stroke-width="0.7" fill="none"/>
<path d="M629.2 392L629.2 602.4" stroke="#3a3a3c" stroke-width="0.7" fill="none"/>
<path d="M649.8 392L649.8 602.4" stroke="#3a3a3c" stroke-width="0.7" fill="none"/>
<path d="M670.4 392L670.4 602.4" stroke="#3a3a3c" stroke-width="0.7" fill="none"/>
<path d="M738.2 411L738.2 602.4" stroke="#333335" stroke-width="0.7" fill="none"/>
<rect x="485.8" y="412.8" width="5.6" height="8" fill="#f4f4f4" rx="0.4"/>
<g fill="#e0e0e0"><text x="496" y="419.8" font-family="Liberation Sans" font-size="7.4" textLength="30.41" lengthAdjust="spacingAndGlyphs" xml:space="preserve">getConfig</text></g>
<g fill="#e0e0e0"><text x="554.6" y="419.8" font-family="Liberation Sans" font-size="7.4" xml:space="preserve">200</text></g>
<g fill="#e0e0e0"><text x="576" y="419.8" font-family="Liberation Sans" font-size="7.4" textLength="9.87" lengthAdjust="spacingAndGlyphs" xml:space="preserve">xhr</text></g>
<g fill="#e0e0e0"><text x="598" y="419.8" font-family="Liberation Sans" font-size="7.4" textLength="26.73" lengthAdjust="spacingAndGlyphs" xml:space="preserve">VM13 ...</text></g>
<path d="M598 421L618.73 421" stroke="#e0e0e0" stroke-width="0.6" fill="none"/>
<g fill="#e0e0e0"><text x="632" y="419.8" font-family="Liberation Sans" font-size="7.4" xml:space="preserve">59...</text></g>
<g fill="#e0e0e0"><text x="652.4" y="419.8" font-family="Liberation Sans" font-size="7.4" xml:space="preserve">11...</text></g>
<rect x="480.5" y="423.67" width="319.5" height="13.5" fill="#292a2c"/>
<rect x="485.8" y="426.27" width="5.8" height="8" fill="#f0e8f8" rx="0.5" stroke="#9a6ad0" stroke-width="0.8"/>
<rect x="487" y="429.27" width="3.4" height="2.4" fill="#7a4ab8"/>
<g fill="#e0e0e0"><text x="496" y="433.27" font-family="Liberation Sans" font-size="7.4" textLength="19.36" lengthAdjust="spacingAndGlyphs" xml:space="preserve">qd.jpg</text></g>
<g fill="#e0e0e0"><text x="554.6" y="433.27" font-family="Liberation Sans" font-size="7.4" xml:space="preserve">200</text></g>
<g fill="#e0e0e0"><text x="576" y="433.27" font-family="Liberation Sans" font-size="7.4" textLength="13.43" lengthAdjust="spacingAndGlyphs" xml:space="preserve">jpeg</text></g>
<g fill="#b4b4b4"><text x="598" y="433.27" font-family="Liberation Sans" font-size="7.4" xml:space="preserve">Other</text></g>
<g fill="#b4b4b4"><text x="632" y="433.27" font-family="Liberation Sans" font-size="7.4" xml:space="preserve">(di...</text></g>
<g fill="#e0e0e0"><text x="652.4" y="433.27" font-family="Liberation Sans" font-size="7.4" xml:space="preserve">23...</text></g>
<rect x="485.8" y="439.74" width="5.6" height="8" fill="#f4f4f4" rx="0.4"/>
<g fill="#e0e0e0"><text x="496" y="446.74" font-family="Liberation Sans" font-size="7.4" textLength="30.41" lengthAdjust="spacingAndGlyphs" xml:space="preserve">getConfig</text></g>
<g fill="#e0e0e0"><text x="554.6" y="446.74" font-family="Liberation Sans" font-size="7.4" xml:space="preserve">200</text></g>
<g fill="#e0e0e0"><text x="576" y="446.74" font-family="Liberation Sans" font-size="7.4" textLength="9.87" lengthAdjust="spacingAndGlyphs" xml:space="preserve">xhr</text></g>
<g fill="#e0e0e0"><text x="598" y="446.74" font-family="Liberation Sans" font-size="7.4" textLength="26.73" lengthAdjust="spacingAndGlyphs" xml:space="preserve">VM13 ...</text></g>
<path d="M598 447.94L618.73 447.94" stroke="#e0e0e0" stroke-width="0.6" fill="none"/>
<g fill="#e0e0e0"><text x="632" y="446.74" font-family="Liberation Sans" font-size="7.4" xml:space="preserve">59...</text></g>
<g fill="#e0e0e0"><text x="652.4" y="446.74" font-family="Liberation Sans" font-size="7.4" xml:space="preserve">13...</text></g>
<rect x="480.5" y="450.61" width="319.5" height="13.5" fill="#292a2c"/>
<rect x="485.8" y="453.21" width="5.6" height="8" fill="#f0f0e8" rx="0.4"/>
<rect x="487.6" y="454.41" width="2" height="5.6" fill="#c8a030"/>
<rect x="487.8" y="455.21" width="1.6" height="1.6" fill="#2a2a2a"/>
<g fill="#e0e0e0"><text x="496" y="460.21" font-family="Liberation Sans" font-size="7.4" textLength="32.78" lengthAdjust="spacingAndGlyphs" xml:space="preserve">zhuye.png</text></g>
<g fill="#e0e0e0"><text x="554.6" y="460.21" font-family="Liberation Sans" font-size="7.4" xml:space="preserve">200</text></g>
<g fill="#e0e0e0"><text x="576" y="460.21" font-family="Liberation Sans" font-size="7.4" textLength="11.85" lengthAdjust="spacingAndGlyphs" xml:space="preserve">png</text></g>
<g fill="#e0e0e0"><text x="598" y="460.21" font-family="Liberation Sans" font-size="7.4" textLength="27.94" lengthAdjust="spacingAndGlyphs" xml:space="preserve">:56396...</text></g>
<path d="M598 461.41L625.94 461.41" stroke="#e0e0e0" stroke-width="0.6" fill="none"/>
<g fill="#b4b4b4"><text x="632" y="460.21" font-family="Liberation Sans" font-size="7.4" xml:space="preserve">(di...</text></g>
<g fill="#e0e0e0"><text x="652.4" y="460.21" font-family="Liberation Sans" font-size="7.4" xml:space="preserve">5 ...</text></g>
<rect x="485.8" y="466.68" width="5.6" height="8" fill="#f4e448" rx="0.4"/>
<rect x="486.8" y="468.68" width="3.6" height="4" fill="#f0d020"/>
<g fill="#e0e0e0"><text x="496" y="473.68" font-family="Liberation Sans" font-size="7.4" textLength="23.31" lengthAdjust="spacingAndGlyphs" xml:space="preserve">bg1.jpg</text></g>
<g fill="#e0e0e0"><text x="554.6" y="473.68" font-family="Liberation Sans" font-size="7.4" xml:space="preserve">200</text></g>
<g fill="#e0e0e0"><text x="576" y="473.68" font-family="Liberation Sans" font-size="7.4" textLength="13.43" lengthAdjust="spacingAndGlyphs" xml:space="preserve">jpeg</text></g>
<g fill="#e0e0e0"><text x="598" y="473.68" font-family="Liberation Sans" font-size="7.4" textLength="27.94" lengthAdjust="spacingAndGlyphs" xml:space="preserve">:56396...</text></g>
<path d="M598 474.88L625.94 474.88" stroke="#e0e0e0" stroke-width="0.6" fill="none"/>
<g fill="#b4b4b4"><text x="632" y="473.68" font-family="Liberation Sans" font-size="7.4" xml:space="preserve">(di...</text></g>
<g fill="#e0e0e0"><text x="652.4" y="473.68" font-family="Liberation Sans" font-size="7.4" xml:space="preserve">2 ...</text></g>
<rect x="480.5" y="477.55" width="319.5" height="13.5" fill="#292a2c"/>
<rect x="485.8" y="480.15" width="5.6" height="8" fill="#f4f8fa" rx="0.4"/>
<rect x="486.6" y="483.35" width="4" height="1.8" fill="#2aa0d8"/>
<g fill="#e0e0e0"><text x="496" y="487.15" font-family="Liberation Sans" font-size="7.4" textLength="22.9" lengthAdjust="spacingAndGlyphs" xml:space="preserve">czt.png</text></g>
<g fill="#e0e0e0"><text x="554.6" y="487.15" font-family="Liberation Sans" font-size="7.4" xml:space="preserve">200</text></g>
<g fill="#e0e0e0"><text x="576" y="487.15" font-family="Liberation Sans" font-size="7.4" textLength="11.85" lengthAdjust="spacingAndGlyphs" xml:space="preserve">png</text></g>
<g fill="#e0e0e0"><text x="598" y="487.15" font-family="Liberation Sans" font-size="7.4" textLength="27.94" lengthAdjust="spacingAndGlyphs" xml:space="preserve">:56396...</text></g>
<path d="M598 488.35L625.94 488.35" stroke="#e0e0e0" stroke-width="0.6" fill="none"/>
<g fill="#b4b4b4"><text x="632" y="487.15" font-family="Liberation Sans" font-size="7.4" xml:space="preserve">(di...</text></g>
<g fill="#e0e0e0"><text x="652.4" y="487.15" font-family="Liberation Sans" font-size="7.4" xml:space="preserve">1 ...</text></g>
<rect x="485.8" y="493.62" width="5.6" height="8" fill="#faf4f6" rx="0.4"/>
<rect x="486.6" y="496.82" width="4" height="1.8" fill="#e8207a"/>
<g fill="#e0e0e0"><text x="496" y="500.62" font-family="Liberation Sans" font-size="7.4" textLength="26.46" lengthAdjust="spacingAndGlyphs" xml:space="preserve">czts.png</text></g>
<g fill="#e0e0e0"><text x="554.6" y="500.62" font-family="Liberation Sans" font-size="7.4" xml:space="preserve">200</text></g>
<g fill="#e0e0e0"><text x="576" y="500.62" font-family="Liberation Sans" font-size="7.4" textLength="11.85" lengthAdjust="spacingAndGlyphs" xml:space="preserve">png</text></g>
<g fill="#e0e0e0"><text x="598" y="500.62" font-family="Liberation Sans" font-size="7.4" textLength="27.94" lengthAdjust="spacingAndGlyphs" xml:space="preserve">:56396...</text></g>
<path d="M598 501.82L625.94 501.82" stroke="#e0e0e0" stroke-width="0.6" fill="none"/>
<g fill="#b4b4b4"><text x="632" y="500.62" font-family="Liberation Sans" font-size="7.4" xml:space="preserve">(di...</text></g>
<g fill="#e0e0e0"><text x="652.4" y="500.62" font-family="Liberation Sans" font-size="7.4" xml:space="preserve">2 ...</text></g>
<rect x="673.6" y="413.6" width="1.8" height="6.6" fill="#f0f0f0" rx="0.6"/>
<rect x="675.4" y="413.6" width="14.6" height="6.6" fill="#1fc25a" rx="0.6"/>
<rect x="675" y="427.07" width="20.8" height="5" fill="#f8f8f8" rx="0.6"/>
<rect x="695.6" y="427.07" width="2.4" height="6.6" fill="#2a9fe0" rx="0.6"/>
<rect x="736" y="440.54" width="2" height="6.6" fill="#f0f0f0" rx="0.6"/>
<rect x="738" y="440.54" width="13.4" height="6.6" fill="#1fc25a" rx="0.6"/>
<rect x="751.4" y="440.54" width="4.2" height="6.6" fill="#2a9fe0" rx="0.6"/>
<rect x="743.6" y="454.01" width="2.4" height="6.6" fill="#2a9fe0" rx="0.6"/>
<rect x="743.6" y="467.48" width="2.4" height="6.6" fill="#2a9fe0" rx="0.6"/>
<rect x="756" y="480.95" width="44" height="5" fill="#f8f8f8" rx="0.6"/>
<rect x="756" y="494.42" width="44" height="5" fill="#f8f8f8" rx="0.6"/>
<rect x="797.6" y="480.15" width="2.4" height="7.4" fill="#2a9fe0"/>
<rect x="797.6" y="493.62" width="2.4" height="7.4" fill="#2a9fe0"/>
<path d="M480.5 602.6L800 602.6" stroke="#444446" stroke-width="0.7" fill="none"/>
<rect x="480.5" y="603" width="319.5" height="17.8" fill="#292a2d"/>
<path d="M480.5 620.8L800 620.8" stroke="#1e1e1e" stroke-width="0.7" fill="none"/>
<g fill="#e0e0e0"><text x="487.4" y="614.4" font-family="Liberation Sans" font-size="7.4" textLength="35" lengthAdjust="spacingAndGlyphs" xml:space="preserve">7 requests</text></g>
<path d="M528.8 606L528.8 618" stroke="#4a4a4c" stroke-width="0.7" fill="none"/>
<g fill="#e0e0e0"><text x="535" y="614.4" font-family="Liberation Sans" font-size="7.4" textLength="58.8" lengthAdjust="spacingAndGlyphs" xml:space="preserve">1.2 kB transferred</text></g>
<path d="M600.8 606L600.8 618" stroke="#4a4a4c" stroke-width="0.7" fill="none"/>
<g fill="#e0e0e0"><text x="606.2" y="614.4" font-family="Liberation Sans" font-size="7.4" textLength="57" lengthAdjust="spacingAndGlyphs" xml:space="preserve">590 kB resources</text></g>
<g fill="#c0c0c0"><text class="cj" x="4.6" y="631.8" font-size="7.8">页面路径</text></g>
<path d="M39.4 627.8L43 627.8L41.2 630Z" fill="#c0c0c0"/>
<path d="M47.4 624L47.4 634" stroke="#555" stroke-width="0.7" fill="none"/>
<g fill="#b8b8b8"><text x="53" y="631.4" font-family="Liberation Sans" font-size="7.6" textLength="62.8" lengthAdjust="spacingAndGlyphs" xml:space="preserve">pages/index/index</text></g>
<path d="M121 626.4L121 633L126 633L126 626.4ZM122.6 626.2L122.6 624.8L127.6 624.8L127.6 631.4L126.2 631.4" fill="none" stroke="#b0b0b0" stroke-width="0.8"/>
<path d="M315.4 629Q321 623.6 326.6 629Q321 634.4 315.4 629Z" fill="none" stroke="#a8a8a8" stroke-width="0.85"/>
<circle cx="321" cy="629" r="1.6" fill="none" stroke="#a8a8a8" stroke-width="0.85"/>
<circle cx="338.6" cy="629" r="0.8" fill="#a8a8a8"/>
<circle cx="342.2" cy="629" r="0.8" fill="#a8a8a8"/>
<circle cx="345.8" cy="629" r="0.8" fill="#a8a8a8"/>
<circle cx="366" cy="629" r="3.5" fill="none" stroke="#a8a8a8" stroke-width="0.8"/>
<path d="M364.6 627.6L367.4 630.4M367.4 627.6L364.6 630.4" fill="none" stroke="#a8a8a8" stroke-width="0.7"/>
<g fill="#a8a8a8"><text x="372.6" y="631.8" font-family="Liberation Sans" font-size="7.6" xml:space="preserve">0</text></g>
<path d="M379.4 632.4L383.2 625.6L387 632.4Z" fill="none" stroke="#a8a8a8" stroke-width="0.8"/>
<path d="M383.2 628.2L383.2 630.6" stroke="#a8a8a8" stroke-width="0.7" fill="none"/>
<g fill="#a8a8a8"><text x="390.2" y="631.8" font-family="Liberation Sans" font-size="7.6" xml:space="preserve">2</text></g>
<g fill="#9c9c9c"><text class="cj" x="570" y="632" font-size="7.5">行</text><text x="577.55" y="632" font-family="Liberation Sans" font-size="7.5" textLength="10.35" lengthAdjust="spacingAndGlyphs" xml:space="preserve"> 3, </text><text class="cj" x="587.9" y="632" font-size="7.5">列</text><text x="595.45" y="632" font-family="Liberation Sans" font-size="7.5" textLength="10.76" lengthAdjust="spacingAndGlyphs" xml:space="preserve"> 6 (</text><text class="cj" x="606.21" y="632" font-size="7.5">选中</text><text x="621.31" y="632" font-family="Liberation Sans" font-size="7.5" textLength="8.69" lengthAdjust="spacingAndGlyphs" xml:space="preserve"> 3)</text></g>
<g fill="#9c9c9c"><text class="cj" x="640" y="632" font-size="7.43">空格</text><text x="654.85" y="632" font-family="Liberation Sans" font-size="7.5" textLength="8.15" lengthAdjust="spacingAndGlyphs" xml:space="preserve">: 2</text></g>
<g fill="#9c9c9c"><text x="673" y="632" font-family="Liberation Sans" font-size="7.5" textLength="20.8" lengthAdjust="spacingAndGlyphs" xml:space="preserve">UTF-8</text></g>
<g fill="#9c9c9c"><text x="703" y="632" font-family="Liberation Sans" font-size="7.5" textLength="17.6" lengthAdjust="spacingAndGlyphs" xml:space="preserve">CRLF</text></g>
<g fill="#9c9c9c"><text x="730" y="632" font-family="Liberation Sans" font-size="7.5" textLength="34.2" lengthAdjust="spacingAndGlyphs" xml:space="preserve">JavaScript</text></g>
<path d="M777.8 632L783.6 632L782.6 630.4L782.6 627.8Q782.6 625.4 780.7 625.4Q778.8 625.4 778.8 627.8L778.8 630.4ZM779.9 633.2Q780.7 634.2 781.5 633.2" fill="none" stroke="#d8d8d8" stroke-width="0.9"/>
<g fill="#9c9c9c"><text x="790" y="632" font-family="Liberation Sans" font-size="7.5" xml:space="preserve">1</text></g>
<clipPath id="ov"><rect x="225" y="256.3" width="351.20000000000005" height="120.5"/></clipPath>
<rect x="225" y="256.3" width="351.2" height="120.5" fill="#1ea0f6" opacity="0.88"/>
<path d="M225 256.6L576.2 256.6" stroke="#6ac0f0" stroke-width="0.6" fill="none" opacity="0.5"/>
<g clip-path="url(#ov)">
<path d="M225 256.3L237.6 256.3Q246.4 262.6 248.8 272.8Q239 279.4 225 278.8Z" fill="#2fae54"/>
<path d="M226 266Q233 264 236 268Q238 272 235 275M231 270Q234 271 233 274" fill="none" stroke="#3f9fd8" stroke-width="0.7" opacity="0.7"/>
<g transform="translate(352.4 265) rotate(22)">
<path d="M0 10Q-12.21 0.4 -9.25 -5.6Q-6.29 -11.6 -1.3 -8Q-1.85 -4 -0.74 -1Q0 -4.4 1.3 -8.8Q6.29 -11.6 9.25 -5.6Q12.21 0.4 0 10Z" fill="#16a79a"/>
</g>
<g transform="translate(374 250.4) rotate(-12)">
<path d="M0 12Q-19.8 0.48 -15 -6.72Q-10.2 -13.92 -2.1 -9.6Q10.2 -13.92 15 -6.72Q19.8 0.48 0 12Z" fill="#27ab5c"/>
</g>
<g transform="translate(431 256.4) rotate(-62)">
<path d="M0 12Q-11.22 0.48 -8.5 -6.72Q-5.78 -13.92 -1.19 -9.6Q5.78 -13.92 8.5 -6.72Q11.22 0.48 0 12Z" fill="#16a79a"/>
</g>
<g transform="translate(411.4 269.6) rotate(17)">
<path d="M0 12.5Q-11.62 0.5 -8.8 -7Q-5.98 -14.5 -1.23 -10Q-1.76 -5 -0.7 -2.5Q0 -5.5 1.23 -11Q5.98 -14.5 8.8 -7Q11.62 0.5 0 12.5Z" fill="#e4dc1a"/>
</g>
<g transform="translate(404.4 254.6) rotate(0)">
<path d="M0 3.5Q-5.94 0.14 -4.5 -1.96Q-3.06 -4.06 -0.63 -2.8Q3.06 -4.06 4.5 -1.96Q5.94 0.14 0 3.5Z" fill="#9cc832"/>
</g>
<g transform="translate(560.6 271.4) rotate(19)">
<path d="M0 12Q-11.62 0.48 -8.8 -6.72Q-5.98 -13.92 -1.23 -9.6Q-1.76 -4.8 -0.7 -1.92Q0 -5.28 1.23 -10.56Q5.98 -13.92 8.8 -6.72Q11.62 0.48 0 12Z" fill="#e4dc1a"/>
</g>
<g transform="translate(553.6 255.6) rotate(0)">
<path d="M0 4Q-7.26 0.16 -5.5 -2.24Q-3.74 -4.64 -0.77 -3.2Q3.74 -4.64 5.5 -2.24Q7.26 0.16 0 4Z" fill="#9cc832"/>
</g>
<g transform="translate(574.6 262) rotate(-22)">
<path d="M0 6.5Q-4.88 0.26 -3.7 -3.64Q-2.52 -7.54 -0.52 -5.2Q2.52 -7.54 3.7 -3.64Q4.88 0.26 0 6.5Z" fill="#16a79a"/>
</g>
<g transform="translate(567.4 367.6) rotate(97)">
<path d="M0 13.5Q-12.54 0.54 -9.5 -7.56Q-6.46 -15.66 -1.9 -10.8Q-1.9 -5.4 -0.76 0Q0 -5.94 1.9 -11.88Q6.46 -15.66 9.5 -7.56Q12.54 0.54 0 13.5Z" fill="#e4dc1a"/>
</g>
<g transform="translate(235.6 363) rotate(-105)">
<path d="M0 11Q-8.98 0.44 -6.8 -6.16Q-4.62 -12.76 -1.36 -8.8Q-1.36 -4.4 -0.54 0Q0 -4.84 1.36 -9.68Q4.62 -12.76 6.8 -6.16Q8.98 0.44 0 11Z" fill="#35b04c"/>
</g>
<g transform="translate(253.4 364.4) rotate(152)">
<path d="M0 11.5Q-10.3 0.46 -7.8 -6.44Q-5.3 -13.34 -1.56 -9.2Q-1.56 -4.6 -0.62 0.46Q0 -5.06 1.56 -10.12Q5.3 -13.34 7.8 -6.44Q10.3 0.46 0 11.5Z" fill="#e4dc1a"/>
</g>
<g transform="translate(274.6 371.4) rotate(-110)">
<path d="M0 11.5Q-8.98 0.46 -6.8 -6.44Q-4.62 -13.34 -1.36 -9.2Q-1.36 -4.6 -0.54 0Q0 -5.06 1.36 -10.12Q4.62 -13.34 6.8 -6.44Q8.98 0.46 0 11.5Z" fill="#9cc832"/>
</g>
<g transform="translate(228 376) rotate(0)">
<path d="M0 3.5Q-5.28 0.14 -4 -1.96Q-2.72 -4.06 -0.56 -2.8Q2.72 -4.06 4 -1.96Q5.28 0.14 0 3.5Z" fill="#16a79a"/>
</g>
<path d="M229.6 354Q229 348 233.6 348.6Q236 345.6 239 348Q241.4 350.4 239 353.6" fill="none" stroke="#5aa8e0" stroke-width="0.9" opacity="0.8"/>
</g>
</svg>
</body></html>
